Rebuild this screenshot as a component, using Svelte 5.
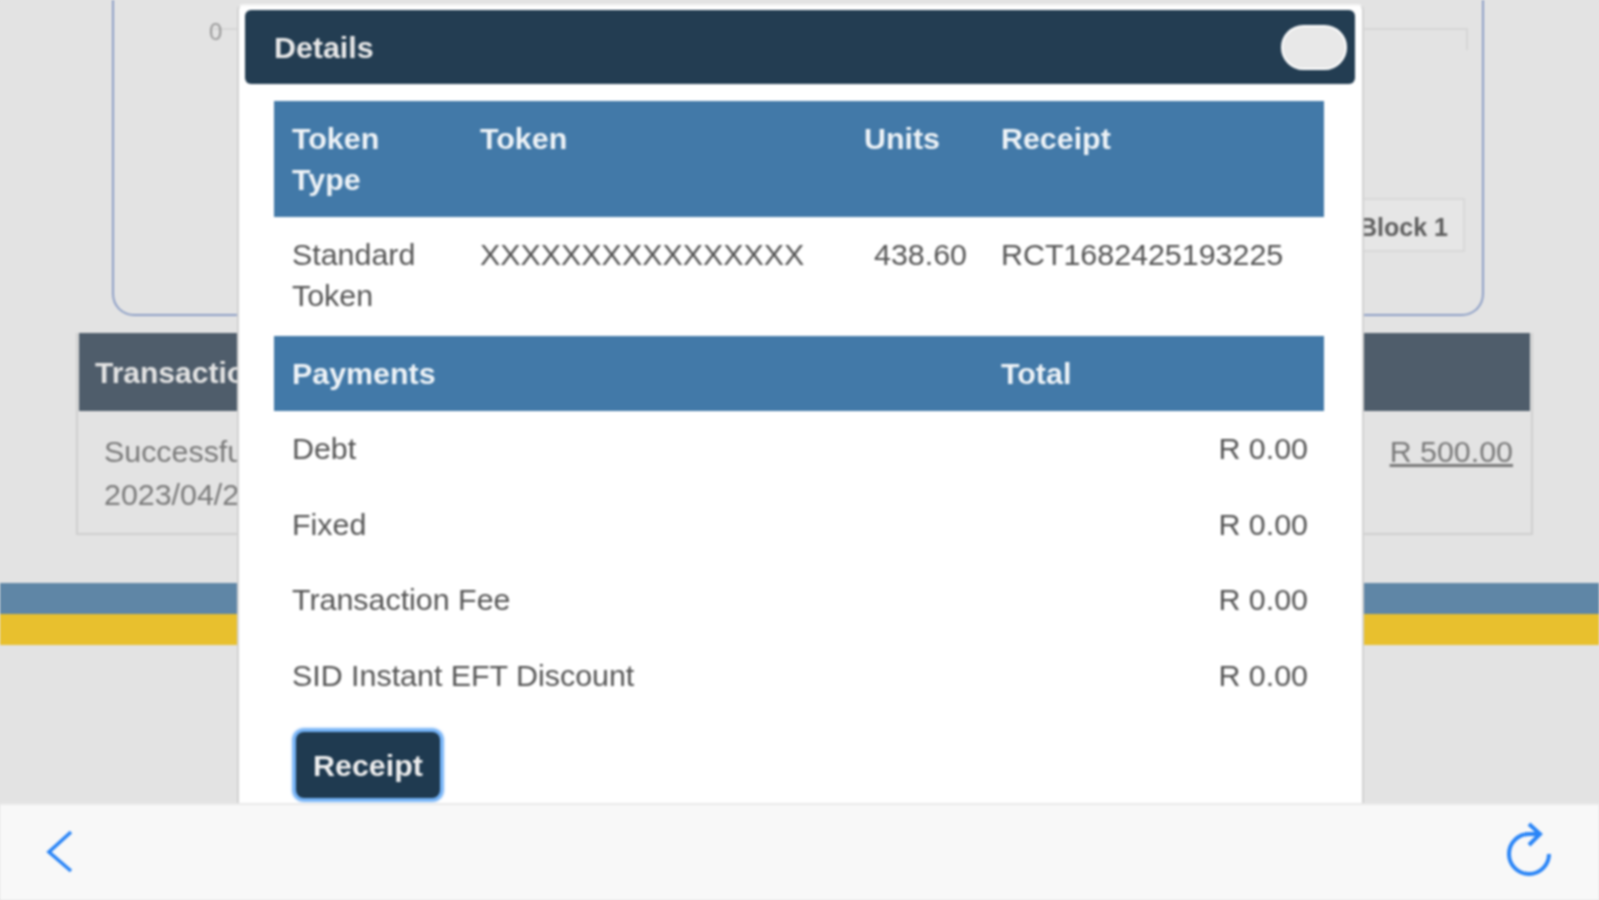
<script>
  const tokens = [
    { type: "Standard Token", token: "XXXXXXXXXXXXXXXX", units: "438.60", receipt: "RCT1682425193225" }
  ];
  const payments = [
    { name: "Debt", total: "R 0.00" },
    { name: "Fixed", total: "R 0.00" },
    { name: "Transaction Fee", total: "R 0.00" },
    { name: "SID Instant EFT Discount", total: "R 0.00" }
  ];
</script>

<div class="screen">
  <main>
    <section class="chart">
      <span class="zero">0</span>
      <div class="axis"></div>
      <button class="block">Block 1</button>
    </section>

    <section class="transactions">
      <h2>Transactions</h2>
      <div class="tx-row">
        <p>Successful<br />2023/04/25</p>
        <a href="#top">R 500.00</a>
      </div>
    </section>

    <div class="strip blue"></div>
    <div class="strip yellow"></div>

    <div class="modal">
      <header>
        <span>Details</span>
        <button class="close" aria-label="Close"></button>
      </header>
      <table>
        <colgroup>
          <col class="c1" /><col class="c2" /><col class="c3" /><col class="c4" />
        </colgroup>
        <thead>
          <tr><th>Token Type</th><th>Token</th><th>Units</th><th>Receipt</th></tr>
        </thead>
        <tbody>
          {#each tokens as t}
            <tr class="token">
              <td>{t.type}</td>
              <td>{t.token}</td>
              <td class="num">{t.units}</td>
              <td>{t.receipt}</td>
            </tr>
          {/each}
        </tbody>
        <thead>
          <tr><th colspan="3">Payments</th><th>Total</th></tr>
        </thead>
        <tbody>
          {#each payments as p}
            <tr class="pay">
              <td colspan="3">{p.name}</td>
              <td class="num">{p.total}</td>
            </tr>
          {/each}
        </tbody>
      </table>
      <button class="receipt">Receipt</button>
    </div>
  </main>

  <footer>
    <svg class="back" width="30" height="48" viewBox="0 0 30 48" aria-label="Back">
      <path d="M26 5 L4 25 L26 44" fill="none" stroke="#2a85f7" stroke-width="3.6" />
    </svg>
    <svg class="reload" width="56" height="60" viewBox="0 0 56 60" aria-label="Reload">
      <path d="M47 33 A20 20 0 1 1 27 13 H38" fill="none" stroke="#2a85f7" stroke-width="4" />
      <path d="M27 3 L38 13 L27 24" fill="none" stroke="#2a85f7" stroke-width="4" />
    </svg>
  </footer>
</div>

<style>
  :global(body) {
    margin: 0;
    background: #e3e3e3;
    overflow: hidden;
  }

  .screen {
    height: 900px;
    display: flex;
    flex-direction: column;
    font-family: "Liberation Sans", Arial, sans-serif;
    font-size: 30.4px;
    line-height: 41px;
    color: #555;
    filter: blur(0.9px);
    overflow: hidden;
  }

  main {
    position: relative;
    flex: 1;
    overflow: hidden;
    background: #e3e3e3;
    padding: 0 69px 0 79px;
  }

  .chart {
    height: 316px;
    margin: 0 46px 0 33px;
    border: 2px solid #8d9fc6;
    border-top: 0;
    border-radius: 0 0 22px 22px;
    box-sizing: border-box;
    padding: 28px 17px 0 100px;
    display: flex;
    flex-direction: column;
  }

  .zero {
    position: absolute;
    left: 209px;
    top: 11px;
    font-size: 24px;
    color: #9a9a9a;
  }

  .axis {
    height: 20px;
    margin-right: -3px;
    border-top: 2px solid #d6d6d6;
    border-right: 2px solid #d6d6d6;
  }

  .block {
    align-self: flex-end;
    margin-top: 148px;
    height: 54px;
    width: 170px;
    padding: 5px 15px 0;
    text-align: right;
    background: #e6e6e6;
    border: 2px solid #d8d8d8;
    color: #5e5e5e;
    font: bold 25px "Liberation Sans", Arial, sans-serif;
  }

  .transactions {
    margin: 17px -3px 0;
    border: 2px solid #cfcfcf;
    border-top: 0;
  }

  .transactions h2 {
    height: 78px;
    box-sizing: border-box;
    padding: 19px 16px;
    margin: 0 1px;
    background: #4f5d6b;
    color: #e3e3e3;
    font-size: 30px;
    line-height: 41px;
  }

  .tx-row {
    height: 122px;
    box-sizing: border-box;
    padding: 19px 18px 0 26px;
    display: flex;
    justify-content: space-between;
    align-items: flex-start;
    color: #7a7a7a;
    line-height: 43px;
  }

  .tx-row p {
    margin: 0;
  }

  .tx-row a {
    color: #7a7a7a;
  }

  .strip {
    height: 31px;
    margin: 0 -69px 0 -79px;
  }

  .strip.blue {
    margin-top: 48px;
    background: #5f86a6;
  }

  .strip.yellow {
    background: #e8c02e;
  }

  .modal {
    position: absolute;
    left: 237px;
    right: 235px;
    top: 4px;
    bottom: -40px;
    box-sizing: border-box;
    background: #fff;
    border: 2px solid #d2d2d2;
    border-top-color: #f4f4f4;
    border-radius: 6px 6px 0 0;
    padding: 4px 7px 4px 6px;
  }

  header {
    height: 74px;
    box-sizing: border-box;
    padding: 0 8px 0 29px;
    display: flex;
    justify-content: space-between;
    align-items: center;
    background: #233d52;
    color: #e8e8e8;
    font-weight: bold;
    border-radius: 6px;
  }

  .close {
    width: 66px;
    height: 45px;
    padding: 0;
    background: #e8e8e8;
    border: 2px solid #fff;
    border-radius: 23px;
  }

  table {
    width: 1050px;
    margin: 17px 0 0 29px;
    table-layout: fixed;
    border-collapse: collapse;
  }

  .c1 { width: 190px; }
  .c2 { width: 384px; }
  .c3 { width: 137px; }

  th, td {
    padding: 17px 16px;
    text-align: left;
    vertical-align: top;
    white-space: normal;
  }

  th:first-child, td:first-child {
    padding-left: 18px;
  }

  th {
    background: #4279a8;
    color: #eef3f7;
    font-weight: bold;
  }

  td.num {
    text-align: right;
  }

  .token td {
    padding-bottom: 20px;
  }

  .token td.num {
    padding-right: 18px;
  }

  tr.pay td {
    height: 75.5px;
    box-sizing: border-box;
  }

  .receipt {
    display: block;
    margin: 19px 0 0 51px;
    width: 144px;
    height: 66px;
    padding: 0;
    background: #1f3a50;
    color: #eee;
    font: bold 30.4px "Liberation Sans", Arial, sans-serif;
    border: 0;
    border-radius: 8px;
    box-shadow: 0 0 2px 4px #72b1f6;
  }

  footer {
    height: 97px;
    box-sizing: border-box;
    flex: none;
    background: #f8f8f8;
    border-top: 2px solid #eaeaea;
    padding: 0 41px 0 45px;
    display: flex;
    justify-content: space-between;
    align-items: center;
  }

  .back {
    margin-bottom: 4px;
  }

  .reload {
    margin-bottom: 4px;
  }
</style>
